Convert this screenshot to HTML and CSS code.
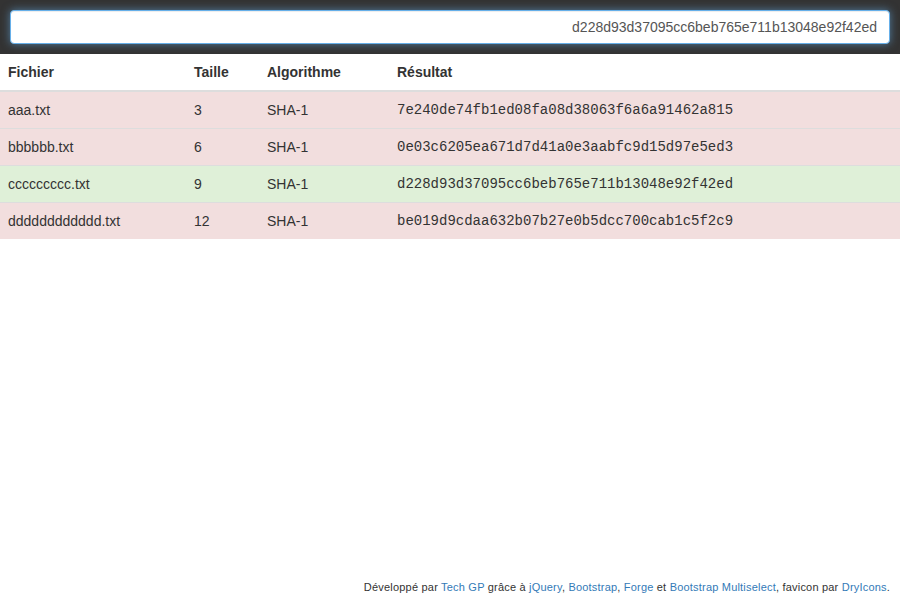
FILE: index.html
```
<!DOCTYPE html>
<html lang="fr">
<head>
<meta charset="utf-8">
<title>Hash</title>
<link rel="stylesheet" href="styles.css">
</head>
<body>
<div class="page">
  <header class="navbar">
    <input class="hash-input" type="text" value="d228d93d37095cc6beb765e711b13048e92f42ed">
  </header>
  <table class="results">
    <colgroup>
      <col class="c-file"><col class="c-size"><col class="c-algo"><col class="c-res">
    </colgroup>
    <thead>
      <tr><th>Fichier</th><th>Taille</th><th>Algorithme</th><th>Résultat</th></tr>
    </thead>
    <tbody>
      <tr class="danger"><td>aaa.txt</td><td>3</td><td>SHA-1</td><td class="mono">7e240de74fb1ed08fa08d38063f6a6a91462a815</td></tr>
      <tr class="danger"><td>bbbbbb.txt</td><td>6</td><td>SHA-1</td><td class="mono">0e03c6205ea671d7d41a0e3aabfc9d15d97e5ed3</td></tr>
      <tr class="success"><td>ccccccccc.txt</td><td>9</td><td>SHA-1</td><td class="mono">d228d93d37095cc6beb765e711b13048e92f42ed</td></tr>
      <tr class="danger"><td>dddddddddddd.txt</td><td>12</td><td>SHA-1</td><td class="mono">be019d9cdaa632b07b27e0b5dcc700cab1c5f2c9</td></tr>
    </tbody>
  </table>
  <footer class="footer">
    Développé par <a href="#">Tech GP</a> grâce à <a href="#">jQuery</a>, <a href="#">Bootstrap</a>, <a href="#">Forge</a> et <a href="#">Bootstrap Multiselect</a>, favicon par <a href="#">DryIcons</a>.
  </footer>
</div>
</body>
</html>
```
FILE: styles.css
```
html, body {
  margin: 0;
  padding: 0;
}
body {
  font-family: "Liberation Sans", Arial, sans-serif;
  font-size: 14px;
  line-height: 20px;
  color: #333;
  background: #fff;
}
.page {
  display: flex;
  flex-direction: column;
  min-height: 600px;
}
.navbar {
  background: #333;
  padding: 10px;
}
.hash-input {
  display: block;
  box-sizing: border-box;
  width: 100%;
  height: 34px;
  padding: 6px 12px;
  font-family: "Liberation Sans", Arial, sans-serif;
  font-size: 14px;
  color: #555;
  text-align: right;
  background: #fff;
  border: 1px solid #66afe9;
  border-radius: 4px;
  box-shadow: inset 0 1px 1px rgba(0,0,0,.075), 0 0 8px rgba(102,175,233,.6);
  outline: none;
}
.results {
  width: 100%;
  border-collapse: collapse;
  border-spacing: 0;
  table-layout: fixed;
}
.c-file { width: 186px; }
.c-size { width: 73px; }
.c-algo { width: 130px; }
.results th,
.results td {
  padding: 8px;
  text-align: left;
  vertical-align: top;
  line-height: 20px;
}
.results th {
  font-weight: bold;
  border-bottom: 2px solid #ddd;
}
.results td {
  border-top: 1px solid #ddd;
}
.results thead + tbody tr:first-child td {
  border-top: 0;
}
.danger td { background: #f2dede; }
.success td { background: #dff0d8; }
.mono {
  font-family: "Liberation Mono", "Courier New", monospace;
  font-size: 14px;
}
.footer {
  margin-top: auto;
  text-align: right;
  font-size: 11px;
  line-height: 14px;
  padding: 0 10px 6px;
  letter-spacing: 0.2px;
  color: #333;
}
.footer a {
  color: #337ab7;
  text-decoration: none;
}
```
